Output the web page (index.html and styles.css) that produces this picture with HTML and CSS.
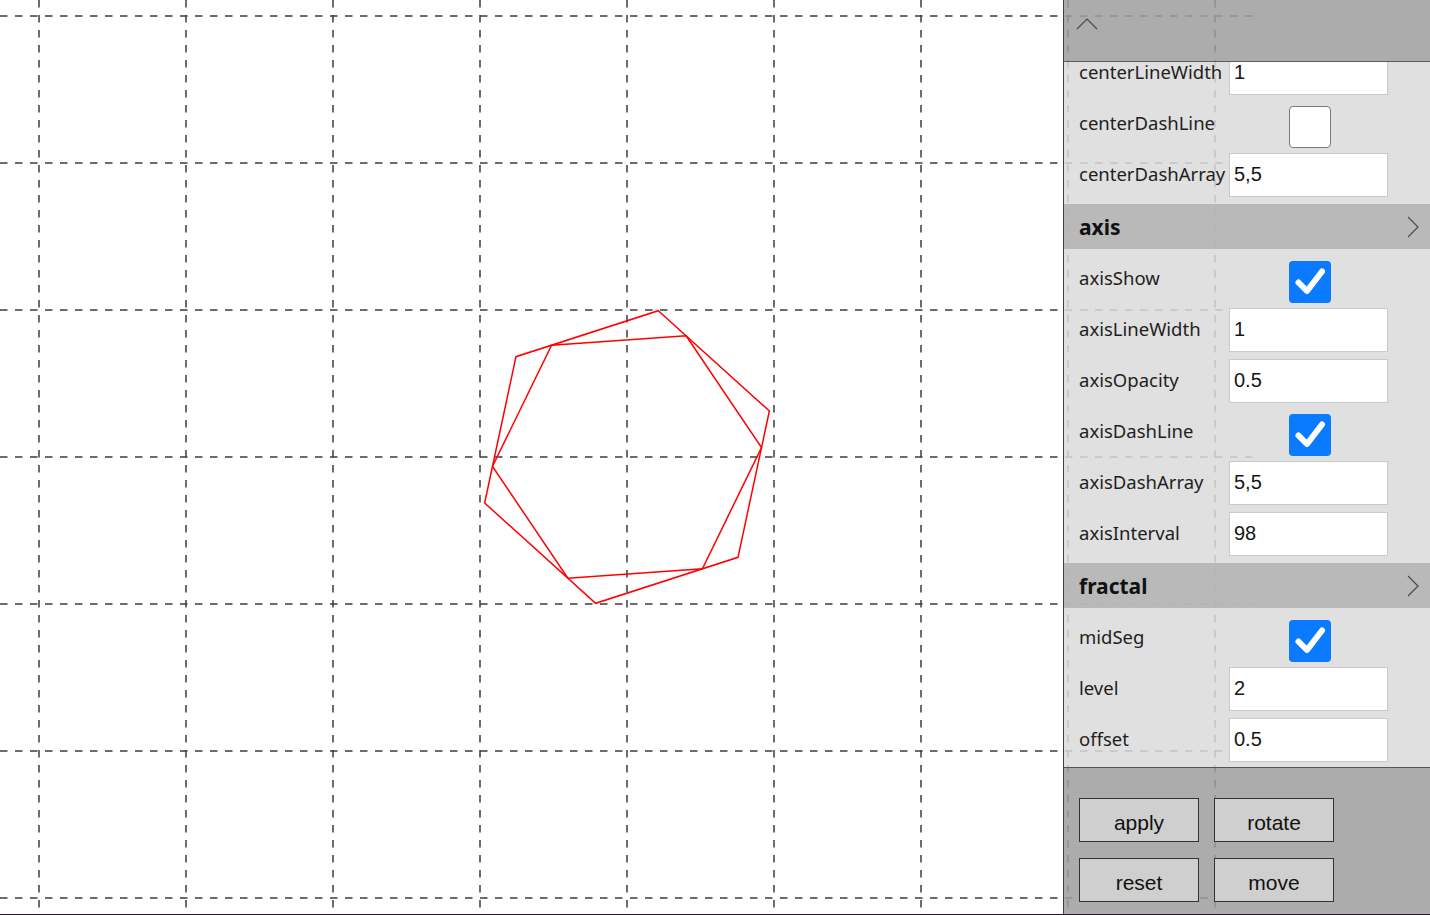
FILE: index.html
```html
<!DOCTYPE html>
<html lang="en">
<head>
<meta charset="utf-8">
<title>Fractal</title>
<link rel="stylesheet" href="styles.css">
</head>
<body>
<div class="stage">
  <svg class="canvas" width="1254" height="914" viewBox="0 0 1254 914">
    <g class="grid">
      <line x1="39" y1="0" x2="39" y2="914"/>
      <line x1="186" y1="0" x2="186" y2="914"/>
      <line x1="333" y1="0" x2="333" y2="914"/>
      <line x1="480" y1="0" x2="480" y2="914"/>
      <line x1="627" y1="0" x2="627" y2="914"/>
      <line x1="774" y1="0" x2="774" y2="914"/>
      <line x1="921" y1="0" x2="921" y2="914"/>
      <line x1="1068" y1="0" x2="1068" y2="914"/>
      <line x1="1215" y1="0" x2="1215" y2="914"/>
      <line x1="0" y1="16" x2="1254" y2="16"/>
      <line x1="0" y1="163" x2="1254" y2="163"/>
      <line x1="0" y1="310" x2="1254" y2="310"/>
      <line x1="0" y1="457" x2="1254" y2="457"/>
      <line x1="0" y1="604" x2="1254" y2="604"/>
      <line x1="0" y1="751" x2="1254" y2="751"/>
      <line x1="0" y1="898" x2="1254" y2="898"/>
    </g>
    <g class="shape">
      <polygon points="658.36,310.72 769.36,411.01 738.0,557.3 595.64,603.28 484.64,502.99 516.0,356.7"/>
      <polygon points="686.11,335.79 761.52,447.58 702.41,568.8 567.89,578.21 492.48,466.42 551.59,345.2"/>
    </g>
  </svg>

  <aside class="panel">
    <div class="panel-top">
      <svg class="chev-up" width="22" height="12" viewBox="0 0 22 12"><polyline points="1,11 11,1 21,11"/></svg>
    </div>
    <div class="panel-scroll">
      <section class="group group-center">
        <div class="rows">
          <div class="row"><span class="label">centerLineWidth</span><input class="field" type="text" value="1"></div>
          <div class="row"><span class="label">centerDashLine</span><span class="check-wrap"><span class="check"></span></span></div>
          <div class="row"><span class="label">centerDashArray</span><input class="field" type="text" value="5,5"></div>
        </div>
      </section>
      <section class="group">
        <div class="group-head"><span>axis</span><svg class="chev-right" width="12" height="22" viewBox="0 0 12 22"><polyline points="1,1 11,11 1,21"/></svg></div>
        <div class="rows">
          <div class="row"><span class="label">axisShow</span><span class="check-wrap"><span class="check on"><svg viewBox="0 0 42 42" width="42" height="42"><path d="M9.5 21.5 L18 30 L33 10.5"/></svg></span></span></div>
          <div class="row"><span class="label">axisLineWidth</span><input class="field" type="text" value="1"></div>
          <div class="row"><span class="label">axisOpacity</span><input class="field" type="text" value="0.5"></div>
          <div class="row"><span class="label">axisDashLine</span><span class="check-wrap"><span class="check on"><svg viewBox="0 0 42 42" width="42" height="42"><path d="M9.5 21.5 L18 30 L33 10.5"/></svg></span></span></div>
          <div class="row"><span class="label">axisDashArray</span><input class="field" type="text" value="5,5"></div>
          <div class="row"><span class="label">axisInterval</span><input class="field" type="text" value="98"></div>
        </div>
      </section>
      <section class="group">
        <div class="group-head"><span>fractal</span><svg class="chev-right" width="12" height="22" viewBox="0 0 12 22"><polyline points="1,1 11,11 1,21"/></svg></div>
        <div class="rows">
          <div class="row"><span class="label">midSeg</span><span class="check-wrap"><span class="check on"><svg viewBox="0 0 42 42" width="42" height="42"><path d="M9.5 21.5 L18 30 L33 10.5"/></svg></span></span></div>
          <div class="row"><span class="label">level</span><input class="field" type="text" value="2"></div>
          <div class="row"><span class="label">offset</span><input class="field" type="text" value="0.5"></div>
        </div>
      </section>
    </div>
    <div class="panel-foot">
      <button class="btn" type="button">apply</button>
      <button class="btn" type="button">rotate</button>
      <button class="btn" type="button">reset</button>
      <button class="btn" type="button">move</button>
    </div>
  </aside>
</div>
</body>
</html>
```
FILE: styles.css
```css
html, body {
  margin: 0;
  padding: 0;
}
body {
  background: #221a22;
  width: 1430px;
  height: 915px;
  overflow: hidden;
}
.stage {
  position: relative;
  width: 1430px;
  height: 914px;
  background: #ffffff;
}
.canvas {
  display: block;
}
.grid line {
  stroke: #3c3c3c;
  stroke-width: 1.5;
  stroke-dasharray: 7.5 7.5;
}
.shape polygon {
  fill: none;
  stroke: #ff0000;
  stroke-width: 1.5;
  stroke-linejoin: miter;
}

.panel {
  position: absolute;
  top: 0;
  left: 1063px;
  width: 366px;
  height: 914px;
  border-left: 1px solid #3f3f3f;
  display: flex;
  flex-direction: column;
  font-family: "Noto Sans", "Open Sans", sans-serif;
  color: #1e1e1e;
}
.panel-top {
  flex: none;
  box-sizing: border-box;
  height: 62px;
  background: rgba(158, 158, 158, 0.85);
  border-bottom: 1px solid #5e5e5e;
  display: flex;
  align-items: flex-start;
  padding: 18px 0 0 12px;
}
.chev-up polyline,
.chev-right polyline {
  fill: none;
  stroke: #4a4a4a;
  stroke-width: 1.2;
}
.panel-scroll {
  flex: 1;
  overflow: hidden;
  background: rgba(219, 219, 219, 0.85);
  border-bottom: 1px solid #555555;
}
.group-center .rows {
  margin-top: -19px;
}
.group-head {
  height: 45px;
  background: rgba(177, 177, 177, 0.85);
  display: flex;
  align-items: center;
  justify-content: space-between;
  padding: 0 11px 0 15px;
  font-size: 21px;
  font-weight: 700;
  color: #111;
}
.rows {
  padding: 4px 0;
}
.row {
  height: 51px;
  display: flex;
  align-items: center;
  padding-left: 15px;
}
.label {
  width: 150px;
  flex: none;
  font-size: 18.5px;
  line-height: 1;
}
.field {
  box-sizing: border-box;
  width: 159px;
  height: 44px;
  margin: 0;
  border: 1px solid #c9c9c9;
  background: #ffffff;
  padding: 0 4px;
  font-family: "Liberation Sans", Arial, sans-serif;
  font-size: 20px;
  color: #151515;
  outline: none;
}
.check-wrap {
  width: 159px;
  display: flex;
  padding-left: 60px;
  box-sizing: border-box;
}
.check {
  box-sizing: border-box;
  width: 42px;
  height: 42px;
  margin-top: 6px;
  border: 1px solid #7a7a7a;
  border-radius: 4px;
  background: #ffffff;
  display: block;
}
.check.on {
  border: none;
  background: #0a7bff;
}
.check svg {
  display: block;
}
.check path {
  fill: none;
  stroke: #ffffff;
  stroke-width: 6;
  stroke-linecap: round;
  stroke-linejoin: round;
}
.panel-foot {
  flex: none;
  height: 146px;
  box-sizing: border-box;
  background: rgba(158, 158, 158, 0.85);
  padding: 30px 0 0 15px;
  display: grid;
  grid-template-columns: 120px 120px;
  grid-auto-rows: 44px;
  column-gap: 15px;
  row-gap: 16px;
  align-content: start;
}
.btn {
  box-sizing: border-box;
  width: 120px;
  height: 44px;
  margin: 0;
  padding: 5px 0 0;
  border: 1px solid #333333;
  border-radius: 0;
  background: #cfcfcf;
  font-family: "Liberation Sans", Arial, sans-serif;
  font-size: 21px;
  color: #111111;
}
```
